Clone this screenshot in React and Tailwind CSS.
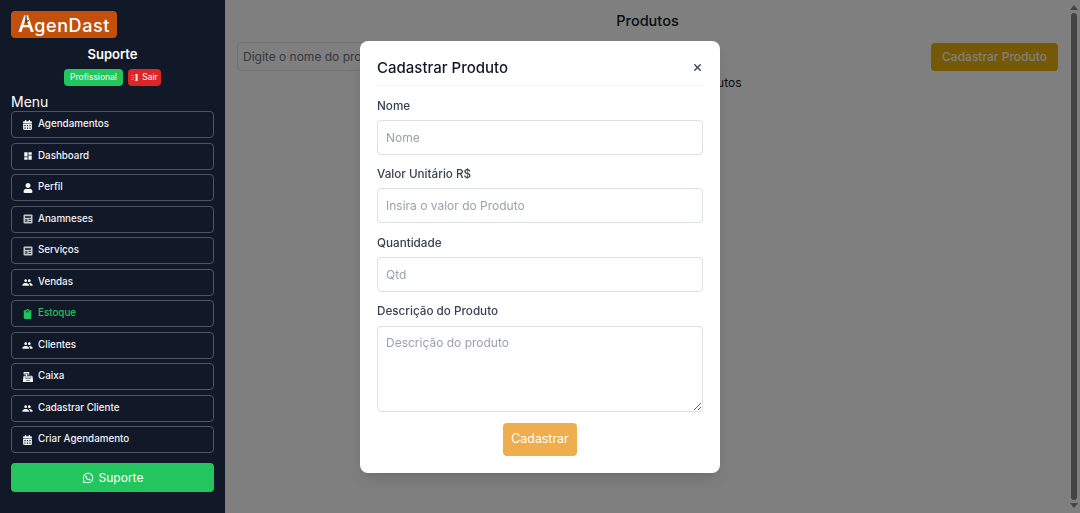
import { FaCalendarAlt, FaUser, FaClipboard, FaCashRegister, FaWhatsapp } from 'react-icons/fa'
import { MdDashboard, MdPeople } from 'react-icons/md'
import { X } from 'lucide-react'

function FormIcon({ className }) {
  return (
    <svg viewBox="0 0 10 10" className={className}>
      <rect x="0.5" y="0.5" width="9" height="9" rx="1" fill="#c4c7cc" />
      <rect x="2" y="2" width="6" height="2" fill="#3b4150" />
      <rect x="2" y="5" width="2.5" height="3" fill="#5b6170" />
      <rect x="5.5" y="5" width="2.5" height="1" fill="#3b4150" />
      <rect x="5.5" y="7" width="2.5" height="1" fill="#3b4150" />
    </svg>
  )
}

function ExitIcon({ className }) {
  return (
    <svg viewBox="0 0 10 10" className={className} fill="#fee2e2">
      <path d="M5 0h4.5v10H5l1.5-1V1z" />
      <path d="M0.5 2h3v1h-3zM1.5 4.5h3v1h-3zM0.5 7h3v1h-3z" />
    </svg>
  )
}

const menu = [
  { label: 'Agendamentos', icon: FaCalendarAlt, size: 'w-[9px] h-[10px]' },
  { label: 'Dashboard', icon: MdDashboard, size: 'w-[10px] h-[10px]' },
  { label: 'Perfil', icon: FaUser, size: 'w-[10px] h-[10px]' },
  { label: 'Anamneses', icon: FormIcon, size: 'w-[10px] h-[10px]' },
  { label: 'Serviços', icon: FormIcon, size: 'w-[10px] h-[10px]' },
  { label: 'Vendas', icon: MdPeople, size: 'w-[11px] h-[11px]' },
  { label: 'Estoque', icon: FaClipboard, size: 'w-[9px] h-[10px]', active: true },
  { label: 'Clientes', icon: MdPeople, size: 'w-[11px] h-[11px]' },
  { label: 'Caixa', icon: FaCashRegister, size: 'w-[10px] h-[10px]' },
  { label: 'Cadastrar Cliente', icon: MdPeople, size: 'w-[11px] h-[11px]' },
  { label: 'Criar Agendamento', icon: FaCalendarAlt, size: 'w-[9px] h-[10px]' },
]

function Field({ label, placeholder }) {
  return (
    <div className="mb-[9.5px]">
      <label className="block text-[11.7px] leading-[20px] font-medium text-gray-700 mb-[4px]">{label}</label>
      <input
        placeholder={placeholder}
        className="block w-full h-[35px] border border-[#dcdfe4] rounded px-2 text-[12px] placeholder:text-gray-400 outline-none"
      />
    </div>
  )
}

export default function App() {
  return (
    <div className="flex h-[513px] overflow-hidden bg-white font-['Inter','Liberation_Sans',sans-serif]">
      <aside className="relative z-20 w-[225px] flex-shrink-0 bg-[#111827] px-[11px] pt-[11px] text-white">
        <div className="relative w-[106px] h-[27px] rounded bg-[#c2500a] flex items-end justify-center pb-[4px] leading-none font-medium">
          <span className="text-[23px] leading-[20px]">A</span>
          <span className="text-[18px] leading-[16px] tracking-[0.6px]">genDast</span>
          <svg viewBox="0 0 6 10" className="absolute left-[13px] top-[4px] w-[6px] h-[10px]" fill="none" stroke="#1f1f1f" strokeWidth="1">
            <path d="M2 0v7l3-2" />
          </svg>
        </div>
        <p className="mt-[6px] text-center text-[13px] leading-[20px] font-semibold">Suporte</p>
        <div className="mt-[5px] flex justify-center gap-[5px]">
          <span className="h-[17px] w-[59px] rounded-sm bg-[#22c55e] flex items-center justify-center text-[8.5px]">Profissional</span>
          <span className="h-[17px] w-[33px] rounded-sm bg-[#dc2626] flex items-center justify-center gap-[4px] text-[8.5px]">
            <ExitIcon className="w-[7px] h-[9px]" />
            Sair
          </span>
        </div>
        <p className="mt-[7px] text-[14px] leading-[18px]">Menu</p>
        <nav className="flex flex-col gap-[4.5px]">
          {menu.map(({ label, icon: Icon, size, active }) => (
            <a
              key={label}
              className={`h-[27px] flex items-center gap-[5px] pl-[10px] rounded border border-gray-600 text-[9.8px] font-medium ${active ? 'text-[#22c55e]' : 'text-gray-100'}`}
            >
              <span className="w-[11px] flex justify-center">
                <Icon className={size} />
              </span>
              {label}
            </a>
          ))}
        </nav>
        <button className="mt-[10px] w-full h-[29px] rounded bg-[#22c55e] flex items-center justify-center gap-[5px] text-[12px]">
          <FaWhatsapp className="w-[12px] h-[12px]" />
          Suporte
        </button>
      </aside>

      <main className="flex-1 min-w-0 pl-[12px] pr-[7px] pt-[11px] text-gray-900">
        <h1 className="text-center text-[14.5px] leading-[20px] font-medium">Produtos</h1>
        <div className="mt-[11px] flex justify-between items-center">
          <input
            placeholder="Digite o nome do produto"
            className="w-[260px] h-[29px] border border-gray-200 rounded px-[5px] text-[12px] placeholder:text-gray-500 outline-none"
          />
          <button className="w-[127px] h-[28px] rounded bg-[#eab308] text-white text-[12px] font-medium">Cadastrar Produto</button>
        </div>
        <p className="mt-[3px] text-center text-[12px] leading-[18px]">Não foram encontrados produtos</p>
      </main>

      <div className="w-[15px] flex-shrink-0 flex flex-col items-center pt-[5px] pb-[5px] pl-[3px]">
        <div className="w-0 h-0 border-x-[4px] border-x-transparent border-b-[5px] border-b-[#888]" />
        <div className="mt-[3px] flex-1 w-[6px] rounded-sm bg-[#888]" />
        <div className="mt-[3px] w-0 h-0 border-x-[4px] border-x-transparent border-t-[5px] border-t-[#888]" />
      </div>

      <div className="fixed inset-0 z-10 bg-black/50" />

      <div className="fixed inset-0 z-30 flex items-center justify-center">
        <div className="w-[360px] h-[432px] bg-white rounded-lg shadow-lg px-[17px] pt-[16px]">
          <div className="flex items-center justify-between pb-[6px] border-b border-gray-100">
            <h2 className="text-[15px] leading-[22px] font-medium text-gray-900">Cadastrar Produto</h2>
            <X className="w-[11px] h-[11px] text-gray-700" strokeWidth={3} />
          </div>
          <div className="mt-[10px]">
            <Field label="Nome" placeholder="Nome" />
            <Field label="Valor Unitário R$" placeholder="Insira o valor do Produto" />
            <Field label="Quantidade" placeholder="Qtd" />
            <label className="block text-[11.7px] leading-[20px] font-medium text-gray-700 mb-[4.5px]">Descrição do Produto</label>
            <textarea
              placeholder="Descrição do produto"
              className="block w-full h-[86px] border border-[#dcdfe4] rounded px-2 pt-[7px] text-[12px] leading-[18px] placeholder:text-gray-400 outline-none"
            />
          </div>
          <div className="mt-[11px] flex justify-center">
            <button className="w-[74px] h-[33px] rounded bg-[#f0ad4e] text-white text-[12.4px]">Cadastrar</button>
          </div>
        </div>
      </div>
    </div>
  )
}
